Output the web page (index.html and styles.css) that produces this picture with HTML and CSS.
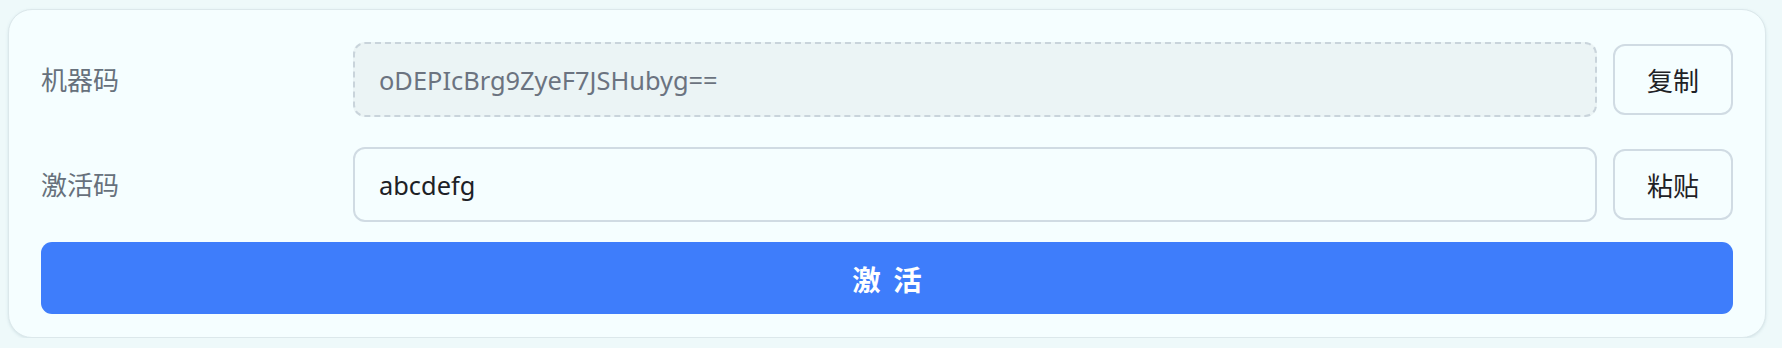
FILE: index.html
```html
<!DOCTYPE html>
<html lang="zh-CN">
<head>
<meta charset="utf-8">
<title>激活</title>
<link rel="stylesheet" href="styles.css">
</head>
<body>
<div class="card">
  <div class="row">
    <div class="label">机器码</div>
    <div class="field field-readonly">oDEPIcBrg9ZyeF7JSHubyg==</div>
    <button class="btn" type="button">复制</button>
  </div>
  <div class="row row-second">
    <div class="label">激活码</div>
    <div class="field">abcdefg</div>
    <button class="btn" type="button">粘贴</button>
  </div>
  <button class="primary" type="button">激 活</button>
</div>
</body>
</html>
```

FILE: styles.css
```css
html, body {
  margin: 0;
  padding: 0;
  background: #eef9fa;
}
body {
  padding: 9px 16px 0 8px;
  font-family: "Noto Sans", "Noto Sans CJK SC", sans-serif;
}
.card {
  background: #f5feff;
  border: 1px solid #dce8eb;
  border-radius: 24px;
  padding: 32px 32px 23px 32px;
  height: 329px;
  box-sizing: border-box;
  box-shadow: 0 1px 3px rgba(150, 180, 190, 0.3);
}
.row {
  display: flex;
  align-items: center;
  height: 75px;
}
.row-second {
  margin-top: 30px;
}
.label {
  flex: 0 0 312px;
  font-size: 26px;
  color: #67717c;
  line-height: 1;
}
.field {
  flex: 1 1 auto;
  height: 75px;
  box-sizing: border-box;
  border: 2px solid #d0dbe3;
  border-radius: 12px;
  padding: 0 24px;
  display: flex;
  align-items: center;
  font-size: 25.4px;
  color: #1d2126;
  background: #f5feff;
}
.field-readonly {
  border: 2px dashed #c9d4db;
  background: #ebf4f5;
  color: #6b7380;
}
.btn {
  flex: 0 0 120px;
  height: 71px;
  margin-left: 16px;
  box-sizing: border-box;
  border: 2px solid #d0dbe3;
  border-radius: 12px;
  background: #f5feff;
  font-family: "Noto Sans CJK SC", "Noto Sans", sans-serif;
  font-size: 26px;
  color: #1f2226;
  padding: 0;
}
.primary {
  display: block;
  width: 100%;
  margin-top: 20px;
  height: 72px;
  border: none;
  border-radius: 11px;
  background: #3e7dfb;
  color: #ffffff;
  font-family: "Noto Sans CJK SC", "Noto Sans", sans-serif;
  font-size: 28.5px;
  font-weight: 700;
  word-spacing: 6px;
  padding: 0;
}
```
